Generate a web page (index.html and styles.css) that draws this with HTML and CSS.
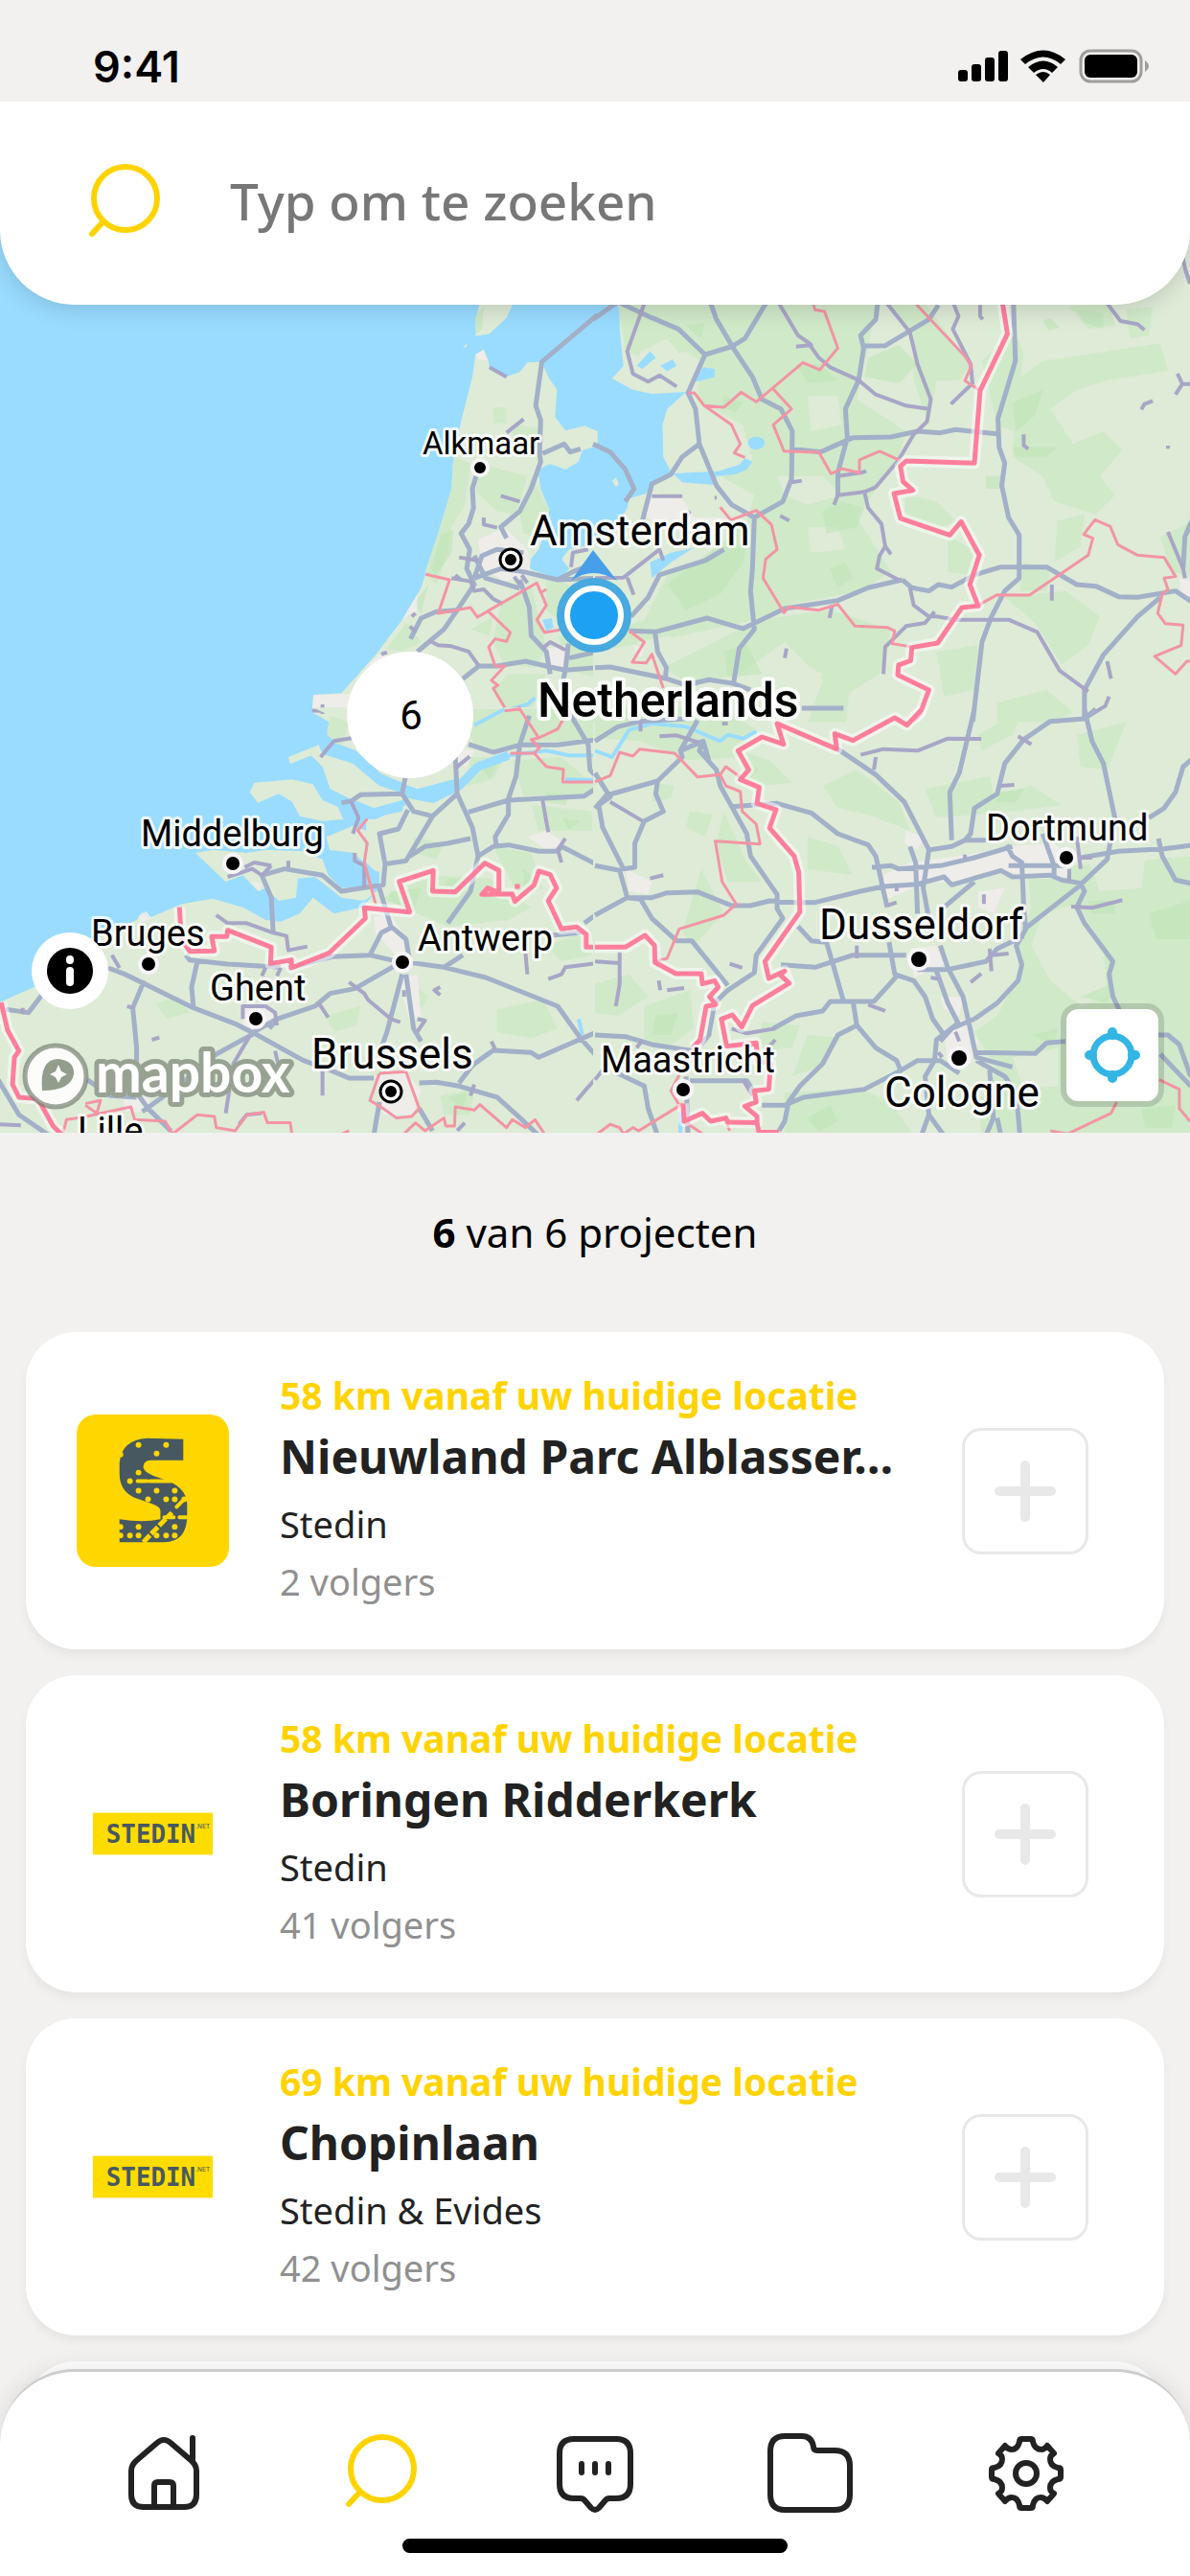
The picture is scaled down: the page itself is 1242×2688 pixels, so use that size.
FILE: index.html
```html
<!DOCTYPE html>
<html lang="nl">
<head>
<meta charset="UTF-8" />
<meta name="viewport" content="width=device-width, initial-scale=1.0" />
<title>Projecten</title>
<link rel="stylesheet" href="styles.css">
</head>
<body>

<!-- shared icons -->
<svg class="sprite" width="0" height="0" aria-hidden="true">
  <symbol id="icon-search" viewBox="0 0 84 84">
    <circle cx="45" cy="37" r="33"/>
    <path d="M21 62 L10 74"/>
  </symbol>
  <symbol id="icon-plus" viewBox="0 0 64 64">
    <path d="M32 5 V59 M5 32 H59"/>
  </symbol>
</svg>

<div class="screen">
  <header class="statusbar">
    <span class="time">9:41</span>
    <svg class="status-icons" width="202" height="36" viewBox="0 0 202 36">
      <rect x="1" y="22" width="10" height="12" rx="3"/>
      <rect x="15" y="16" width="10" height="18" rx="3"/>
      <rect x="29" y="9" width="10" height="25" rx="3"/>
      <rect x="43" y="2" width="10" height="32" rx="3"/>
      <path d="M66 11 Q90 -8 113 11 L108 16 Q90 1 71 16 Z"/>
      <path d="M74 19 Q90 6 105 19 L99 25 Q90 17 80 25 Z"/>
      <path d="M82 27 Q90 21 97 27 L90 35 Z"/>
      <rect x="129" y="2" width="63" height="32" rx="10" fill="none" stroke="#9f9e9d" stroke-width="3"/>
      <rect x="133" y="6" width="55" height="24" rx="6"/>
      <path d="M196 12 Q204 18 196 24 Z" fill="#9f9e9d"/>
    </svg>
  </header>

  <section class="map">
    <form class="search">
      <svg class="search-icon" aria-hidden="true"><use href="#icon-search"/></svg>
      <input type="search" placeholder="Typ om te zoeken" aria-label="Zoeken" />
    </form>

    <svg class="map-canvas" viewBox="0 0 1242 1076" role="img" aria-label="Kaart">
      <rect width="1242" height="1076" fill="#99dcff"/>

      <!-- north west -->
      <g transform="translate(0 204) scale(.396 .3333)">
        <path class="land" d="M1253 180 L1275 165 1287 200 1290 222 1333 250 1370 235 1390 205 1428 203 1445 250 1468 290 1463 375 1490 418 1540 403 1575 420 V465 L1535 480 1525 515 1490 540 1450 522 1418 540 1425 600 1448 665 1440 720 1420 790 1400 820 1395 850 1440 870 1480 880 1500 850 1480 820 1500 790 1575 770 V1335 H875 L822 1300 826 1245 900 1240 990 1120 1060 1010 1110 910 1160 720 1190 600 1195 500 1215 390 1245 250Z"/>
        <path class="land" d="M1270 0 H1360 L1335 65 1290 115 1253 122 1253 70Z M1220 155 L1232 145 1228 158Z"/>
        <path class="wood" d="M1195 500 L1240 520 1225 650 1190 720 1180 800 1150 900 1120 860 1160 720 1190 600Z M1300 345 H1335 V395 H1300Z M1260 520 L1390 560 1360 680 1310 670 1255 610Z M1360 400 L1420 410 1415 470 1340 460Z M1400 560 L1448 665 1430 760 1380 740 1370 680Z M1320 960 L1400 900 1420 1000 1440 1100 1410 1160 1330 1150 1300 1080Z M1020 1100 L1070 1020 1110 1080 1060 1110Z M1240 1040 L1300 1000 1290 1060Z M1340 1180 L1440 1180 1400 1300 1330 1290 1300 1230Z M1470 1060 L1570 1110 V1190 L1500 1170Z M1440 880 L1500 900 1470 1010 1440 980Z"/>
        <path class="forest" d="M1165 740 L1195 730 1190 800 1150 870 1135 850Z M1253 60 L1275 30 1270 100 1253 120Z M1090 960 L1130 900 1110 990Z"/>
        <path class="city" d="M1253 180 L1275 165 1287 200 1260 195Z M826 1245 L930 1243 920 1300 822 1300Z M970 1150 L1000 1120 1050 1130 990 1190Z M1260 760 L1330 720 1390 790 1400 870 1330 890 1270 850Z M1440 1100 L1500 1090 1490 1160 1450 1160Z M1060 1010 L1100 930 1100 980Z"/>
        <path class="water" d="M1430 1010 L1455 1005 1458 1035 1440 1045Z M1400 820 L1440 780 1480 800 1485 850 1430 860Z"/>
        <path class="river" d="M1270 1320 L1330 1295 1390 1275 1410 1255"/>
        <path class="road" d="M1575 55 L1428 203 1412 340 1425 385 1422 490 1425 515 1400 600 1370 670 1320 720 1335 755 M1255 560 L1245 600 1248 660 1235 710 1215 740 1238 790 1230 850 1250 900 1205 980 1170 1040 1100 1110 M1430 490 L1487 460 1503 485 1530 475 M1220 1195 L1262 1155 1310 1155 1385 1140 1450 1158 1490 1168 1575 1160 M1370 885 L1395 970 1400 1060 1440 1110 1450 1180 M1380 860 L1470 885 1575 880 M1250 880 L1270 810 1310 790 1380 800 M1250 880 L1320 850 1380 860 M1250 810 L1280 880 1370 912 M1205 980 L1150 985 1110 1005 1082 1070 M1498 1085 L1490 1168 1480 1220 M1500 1130 L1575 1110 M1470 885 L1510 860 1575 830"/>
        <path class="street" d="M1290 220 L1335 250 M1335 425 L1380 382 M1320 622 L1370 640 M1275 690 V712 L1310 722 M1190 880 L1240 890 1250 920 1275 915 1300 945 1325 960 M1210 815 L1260 825 M1200 870 L1215 885 M1080 1030 L1095 1048 M1085 1000 L1095 990 M1130 1075 L1155 1090 1190 1093 1235 1110 1262 1155 M1005 1118 L1020 1112 M822 1295 L920 1298 M850 1275 V1305 M1430 1100 L1450 1080 1490 1105 M1505 845 L1510 800 1550 790 M1355 875 L1370 900 M1375 870 L1390 895"/>
        <path class="province" d="M1122 868 L1185 885 1155 990 1240 972 1258 1002 1415 895 1425 925 1440 915 M1415 895 L1440 965 1415 1010 1435 1050 1475 1042 M1288 985 L1345 1050 1335 1078 1305 1070 1288 1095 1305 1155 1330 1155 1295 1200 1312 1215 1300 1225 1335 1295 1370 1285 1385 1320"/>
      </g>

      <!-- north east -->
      <g transform="translate(621 204) scale(.396 .3333)">
        <path class="land" d="M60 -300 H1580 V1335 H-5 V765 L60 710 85 660 90 630 135 615 150 585 205 560 180 500 178 400 190 350 240 297 150 303 100 290 45 255 75 215 65 100Z"/>
        <path class="land" d="M45 575 L55 565 63 585 55 595Z"/>
        <path class="wood" d="M60 20 H740 L720 160 690 320 820 420 800 500 690 690 780 860 700 920 520 960 420 1010 230 1060 0 1110 V1060 L130 1010 190 870 290 820 400 700 420 620 330 560 415 510 390 400 270 320 280 200 240 170 150 200 80 170Z"/>
        <path class="wood" d="M760 20 H870 L990 210 960 260 900 260 880 400 840 260 840 120Z M1020 200 L1105 100 1130 180 1100 420 1060 400Z M1110 260 L1180 200 1350 170 1490 145 1510 230 1350 260 1270 290 1200 350 1260 460 1340 420 1390 480 1330 560 1370 620 1320 680 1210 640 1180 560 1100 500Z M820 620 L900 640 950 700 880 740 815 690Z M930 750 L1000 790 990 870 930 860Z M1220 700 L1290 680 1280 780 1210 830Z M1130 830 L1200 850 1190 920 1120 920Z M1080 940 L1240 920 1330 1000 1300 1090 1230 1150 1160 1020Z M430 1010 L620 980 780 1040 750 1180 670 1240 660 1335 H560 L600 1200 500 1080 380 1180 250 1210 180 1160Z M900 1110 L1010 1090 1000 1230 920 1250Z M1060 1270 L1190 1230 1260 1300 1200 1335 H1060Z M1490 750 L1580 700 V880 L1520 860Z M1400 40 L1470 30 1460 120 1410 130Z M1250 30 L1360 20 1370 90 1300 100Z"/>
        <path class="pale" d="M120 170 L190 130 240 200 220 260 150 250 110 200Z M180 400 L240 310 270 400 330 480 360 520 200 540Z M560 310 L640 310 650 400 570 420Z M480 560 L600 560 650 620 560 650 500 620Z M560 720 L640 720 660 790 570 800Z M110 1080 L200 1060 190 1180 120 1150Z M430 1210 L520 1130 600 1180 560 1300 440 1290Z"/>
        <path class="forest" d="M720 190 L800 150 850 210 800 270 710 250Z M600 670 L650 640 710 660 690 720 610 740Z M310 790 L400 770 390 830 330 930 240 980 190 900Z M530 210 L590 210 640 260 560 270Z M620 850 L660 830 680 880 640 910Z M340 1110 L400 1090 440 1180 350 1190Z M340 310 L390 330 370 360 335 345Z M1100 330 L1180 290 1160 370 1110 420Z M1100 470 L1220 470 1190 500 1110 500Z M240 90 L290 80 280 130Z M1270 40 L1340 50 1340 100 1290 80Z M1030 560 H1070 V600 H1030Z M1180 75 L1200 65 1225 95 1195 105Z"/>
        <path class="city" d="M150 610 L230 630 260 690 340 690 320 740 180 730 130 680Z M1540 880 L1580 890 V950 L1545 930Z M100 1090 L130 1100 120 1130Z"/>
        <path class="water" d="M110 215 L145 170 160 190 125 225Z M172 215 L205 195 215 215 190 232Z M260 260 L285 220 315 225 315 250 270 265Z M205 552 L325 545 380 525 395 505 415 515 400 540 370 555 320 560 315 588 230 580Z M145 830 L200 800 260 785 200 830 150 880Z"/>
        <ellipse class="water" cx="425" cy="457" rx="22" ry="20"/>
        <path class="road" d="M-5 70 L60 15 M60 15 L150 65 220 100 290 180 360 155 395 130 450 20 M305 20 L320 70 370 170 415 250 440 320 490 350 520 420 518 570 495 640 420 690 415 850 410 920 420 1040 380 1100 365 1210 M290 180 L245 300 265 350 275 460 230 500 200 555 150 585 138 640 125 700 M275 460 L320 590 360 650 420 690 M518 475 L595 485 680 440 780 438 850 420 910 425 950 415 1060 428 M745 20 L740 70 700 120 708 160 695 260 660 350 665 440 640 550 640 620 M1103 20 L1108 200 1062 380 1065 470 1080 520 1072 590 1090 690 1118 745 1118 880 1080 920 1045 1000 1020 1080 995 1335 M90 1045 L160 1048 295 1005 390 1038 500 975 640 950 720 910 810 885 M95 1000 L140 940 170 870 290 825 340 790 M0 1160 L40 1158 190 1195 240 1215 300 1198 365 1210 410 1230 M158 1050 L165 1110 188 1160 185 1200 M810 885 L835 910 880 920 905 900 940 908 1000 870 1070 845 1190 845 1270 900 1320 905 1380 938 1430 940 1530 920 1580 960 M1490 940 L1430 1000 1340 1120 1290 1230 1290 1320 M-5 460 L40 485 80 540 103 600 80 640 M545 1287 H655 M1580 680 L1555 750 1550 850 M708 153 L765 152 880 70 905 25"/>
        <path class="street" d="M130 20 L85 170 100 240 140 265 170 245 215 280 M485 20 L535 120 560 140 590 190 620 220 695 260 740 305 820 340 880 350 M770 20 L830 110 850 210 885 320 875 390 840 430 800 510 740 595 710 610 640 620 630 650 M710 610 L720 660 755 710 765 780 750 810 743 850 800 885 M765 780 L780 805 M945 20 L958 60 943 100 990 210 995 270 938 335 M530 155 L570 150 535 120 M1350 20 L1385 75 1430 85 1448 103 M1535 240 L1548 272 1530 305 M1548 272 H1580 M1470 325 L1448 335 1440 352 M1130 430 V465 L1142 475 M1510 465 V475 M150 623 H230 M315 628 h6 M250 670 L235 700 M488 685 L512 700 M640 560 L700 550 715 545 M518 580 L545 575 M0 880 L75 878 170 790 180 825 M85 878 L102 932 M505 1100 L500 1130 M625 965 L618 1005 M830 910 L840 965 880 1000 900 1000 950 1010 1090 1010 1165 1048 1225 1170 1300 1235 M895 985 L870 1020 820 1030 765 1095 760 1180 M1204 900 V950 M1510 735 L1550 850 1555 880 M1350 1140 L1360 1195 M1355 1250 L1345 1280 1290 1320 M1015 25 V60 L1022 70"/>
        <path class="province" d="M575 20 L580 40 605 45 640 160 592 228 548 205 425 328 385 298 340 345 288 340 262 300 245 300 M288 340 L360 400 383 460 367 488 395 502 M470 288 L518 350 470 400 498 482 590 486 622 553 650 537 697 550 697 510 750 483 805 512 M845 20 L975 185 992 215 975 262 1015 293 M330 658 L358 698 425 668 465 712 480 790 450 820 443 880 498 988 510 970 590 980 640 962 685 1030 770 1034 790 1045 783 1085 835 1095 M1010 965 L1060 932 1145 933 1300 808 1312 755 1288 743 1318 697 1358 718 1378 775 1430 808 1500 815 1530 875 1500 880 1510 915 1495 930 1483 990 1503 1022 1550 1027 1545 1090 1475 1125 1530 1180 1560 1140 1580 1140 M90 1045 L130 1080 98 1143 135 1145 150 1118 180 1225"/>
        <path class="halo" d="M1073 10 L1087 115 1015 293 1000 520 820 513 805 530 812 578 838 605 788 615 805 693 935 745 965 703 1013 808 988 900 1010 967 967 972 903 1083 835 1097 832 1138 800 1152 798 1183 880 1230 857 1303 830 1335"/>
        <path class="border" d="M1073 10 L1087 115 1015 293 1000 520 820 513 805 530 812 578 838 605 788 615 805 693 935 745 965 703 1013 808 988 900 1010 967 967 972 903 1083 835 1097 832 1138 800 1152 798 1183 880 1230 857 1303 830 1335"/>
      </g>

      <!-- south west -->
      <g transform="translate(0 634) scale(.396 .3333)">
        <path class="land" d="M825 -5 L870 20 862 70 880 105 960 150 1010 210 1100 250 1210 215 1200 255 1130 290 1075 265 1070 300 990 345 965 345 965 480 1000 520 1000 560 955 620 880 640 825 590 790 640 740 665 700 660 640 620 560 593 480 610 390 655 375 635 360 660 250 720 200 800 90 870 -5 920 V1335 H1575 V-5Z"/>
        <path class="land" d="M658 260 L670 230 770 220 825 235 850 285 890 305 905 345 850 350 790 335 770 290 735 265 680 293Z"/>
        <path class="land" d="M760 150 L840 112 850 140 930 170 1000 240 1065 265 1060 285 985 310 930 285 870 250 850 180 820 145 765 172Z"/>
        <path class="land" d="M515 450 L560 440 650 450 700 440 800 445 850 470 865 520 900 560 970 550 990 575 960 600 900 590 830 525 785 530 780 590 735 600 700 560 680 570 640 520 595 540Z"/>
        <path class="land" d="M860 400 L930 365 965 380 960 480 940 460 870 445Z"/>
        <path class="wood" d="M1210 0 H1575 V100 H1430 L1260 130 1230 60Z M1240 150 L1330 150 1300 220 1230 240Z M1350 160 L1480 150 1568 240 1540 270 1380 270Z M1400 300 L1560 320 1560 380 1420 380Z M1010 590 L1140 520 1290 530 1400 620 1340 660 1180 680 1060 620Z M1090 400 L1170 420 1150 470 1090 450Z M1300 430 L1400 450 1430 560 1370 590 1330 500Z M870 20 L920 40 900 120 862 80Z M1310 940 L1430 910 1470 1000 1400 1030 1310 1010Z M410 920 L470 900 500 950 440 970Z M1160 1210 L1250 1190 1240 1270 1170 1270Z M1080 850 L1130 900 1110 940 1075 900Z M1440 740 L1560 690 V770 L1480 790Z M860 960 L950 930 940 990 880 1010Z"/>
        <path class="forest" d="M1030 570 L1110 560 1090 630 1020 600Z M1180 530 L1240 530 1220 580 1170 560Z M1440 260 L1500 270 1490 300 1440 290Z M1260 160 L1310 170 1290 220Z M1480 340 L1530 350 1500 375Z M1180 1215 L1230 1200 1220 1250Z M1380 500 L1410 530 1380 560Z"/>
        <path class="city" d="M985 650 L1030 640 1080 740 1050 780 990 700Z M1050 840 L1100 830 1110 960 1080 980Z M990 1150 L1060 1130 1110 1190 1090 1270 1010 1270Z M365 650 L385 632 400 655 370 670Z M640 920 L700 920 730 980 680 1010 640 990Z M320 1190 L390 1200 400 1260 330 1260Z M1390 400 L1440 380 1490 420 1440 440Z M1210 120 L1250 130 1230 180 1200 170Z M660 540 L690 545 685 570Z"/>
        <path class="water" d="M865 440 L935 450 945 490 1000 510 990 555 920 560 870 520Z M925 280 L985 310 1065 285 1060 320 980 340 930 310Z"/>
        <path class="river thick" d="M860 110 L930 140 990 210 1060 245 M1075 265 L1140 280 1210 240 1260 180 1340 145"/>
        <path class="river" d="M1340 145 L1440 130 1500 145 1575 145 M1250 50 L1330 0 M1490 220 L1570 222 M1525 970 L1535 1020"/>
        <path class="road" d="M1235 110 L1300 135 1370 112 1470 112 1575 95 M1395 20 L1370 110 1360 210 1340 280 1340 330 1305 400 1308 425 M1500 10 L1550 110 1555 190 1575 215 M1068 215 L1060 265 1090 320 1140 335 1205 265 1200 150 M1205 265 L1245 370 1260 460 1240 570 1180 670 M1060 265 L950 268 925 288 900 293 M1075 315 L1050 375 1000 390 1015 485 1070 475 1140 335 M1015 485 L1010 550 900 570 850 520 750 500 690 520 715 590 720 700 M1080 460 L1120 430 1180 420 1240 405 M1235 322 L1340 285 1540 272 1575 245 M1260 460 L1300 430 1340 425 1420 445 1470 445 1480 430 1575 488 M1000 560 L1030 680 1070 720 1080 790 M1030 685 L1005 700 975 770 875 775 760 810 M975 770 L1030 785 1170 808 1280 840 1470 930 1530 1030 1575 1090 M1170 808 L1220 770 M1060 790 L935 875 870 890 830 930 730 970 670 1010 M1060 830 L1020 1010 1005 1060 M1070 830 L1090 1000 1110 1040 M490 770 L500 785 600 798 740 808 M520 790 L505 870 510 935 M285 810 L330 830 510 935 620 985 670 1015 800 1100 870 1130 920 1155 985 1155 M380 850 L350 935 360 1060 360 1200 390 1250 450 1320 M120 880 L75 950 15 940 M670 1015 L570 1080 480 1170 375 1260 M230 1160 L290 1210 360 1215 M-5 1160 L50 1270 130 1335 M1105 1170 L1150 1168 1210 1180 1310 1215 1380 1290 1420 1335 M1210 1170 L1245 1115 1300 1068 1400 1075 1420 1090 1575 1010 M1000 1230 L985 1335 M1105 1250 L1140 1320 M1540 670 L1575 640 M730 970 L710 1000 M1455 708 L1530 700"/>
        <path class="street" d="M845 150 L880 100 930 90 M600 525 L665 500 690 520 715 490 M645 495 L670 480 715 490 M760 475 V495 M570 645 L600 670 650 670 720 700 755 710 760 755 810 743 M925 288 L945 340 930 390 M935 450 L935 475 960 490 V560 M850 1120 V1210 M700 810 L690 835 M740 810 L730 835 M640 970 L640 930 700 930 725 950 730 990 M660 1020 L615 1110 595 1265 M725 1070 L735 1120 M920 855 L960 890 970 910 1030 970 1055 980 M840 920 L865 965 M1200 185 L1238 148 M1430 285 L1445 385 M1490 405 L1470 440 1480 480 M295 770 L315 810 M400 1035 L420 1028 M335 930 L350 935 M60 935 V955 M1160 870 L1145 880 1160 895 M1100 970 L1120 975 1100 1010 M1385 765 L1390 830 M1445 845 L1480 830 1490 808 1575 795 M1295 1040 L1305 1065 M1250 1175 L1240 1210 M1225 1295 L1205 1320 M1520 1225 L1545 1190 1575 1150 M0 1300 L55 1303 M630 1300 L650 1270 690 1265 M1065 880 V900"/>
        <path class="province" d="M968 343 L943 380 968 420 960 480 990 610 M1330 5 L1370 0 1420 90 1400 95 1422 120 1408 138 1345 138 M1420 90 L1470 62 1485 30 M1408 138 L1440 180 1485 188 1483 228 1575 228 M165 1335 L175 1285 215 1278 345 1245 355 1285 435 1290 455 1330 520 1270 565 1275 570 1310 620 1320 650 1270 695 1262 705 1295 765 1295 770 1335 M225 1235 L265 1225 255 1265 225 1240 M1000 1140 L1070 1135 1105 1250 1085 1275 1045 1280 1010 1250 975 1225 1000 1140 M890 1335 L920 1320 M1060 1335 L1095 1295 1120 1320 1170 1280 1175 1305 1198 1305 1200 1245 1250 1255 1265 1238 1335 1310 1350 1285 1385 1310 1410 1285 1435 1330"/>
        <path class="halo" d="M473 620 L478 720 500 758 565 757 558 712 598 712 600 692 715 745 713 797 768 785 768 810 868 763 963 655 960 622 1080 635 1052 540 1142 505 1140 570 1200 572 1278 482 1315 505 1315 575 1350 578 1357 602 1408 550 1420 507 1450 518 1467 560 1445 600 1480 688 1520 682 1545 705 1545 745 1575 745 M3 918 L20 1005 50 1070 38 1090 33 1175 50 1215 100 1220 140 1305 165 1335"/>
        <path class="border" d="M473 620 L478 720 500 758 565 757 558 712 598 712 600 692 715 745 713 797 768 785 768 810 868 763 963 655 960 622 1080 635 1052 540 1142 505 1140 570 1200 572 1278 482 1315 505 1315 575 1285 560 1270 580 1350 578 1357 602 1408 550 1420 507 1450 518 1467 560 1445 600 1480 688 1520 682 1545 705 1545 745 1575 745 M1357 555 H1370 M3 918 L20 1005 50 1070 38 1090 33 1175 50 1215 100 1220 140 1305 165 1335"/>
      </g>

      <!-- south east -->
      <g transform="translate(621 634) scale(.396 .3333)">
        <path class="land" d="M-5 40 H1580 V1335 H-5Z"/>
        <path class="wood" d="M0 -5 H330 L420 60 380 150 240 160 120 100 0 90Z M380 130 L460 160 520 230 450 240 400 210Z M600 240 L690 190 800 290 830 380 720 330 640 310Z M1010 80 L1130 0 1100 80 1020 130Z M1270 80 L1400 40 1350 190 1280 180Z M340 320 L400 480 440 540 350 540 320 420Z M250 320 L310 330 290 400 240 370Z M560 400 L640 430 680 520 560 500Z M160 230 L210 240 200 280 150 290Z M1140 500 L1580 460 V1335 H1020 L1010 1230 1060 1130 1000 1010 1060 960 1120 830 1110 720 1150 620Z M0 860 L90 830 140 900 60 960 0 950Z M130 930 L250 880 260 1000 200 1050 130 1040Z M560 1020 L650 1030 590 1120 520 1150Z M500 1200 L700 1190 780 1230 840 1335 H500Z M440 980 L540 990 520 1060 430 1070Z M870 250 L1040 210 1050 270 1150 240 1230 300 1100 320 900 340Z M280 500 L340 640 260 740 230 700Z"/>
        <path class="pale" d="M1180 640 L1270 610 1340 740 1350 900 1280 930 1200 850 1150 740Z M1300 470 L1450 470 1440 560 1330 570Z M1100 1090 L1220 1060 1220 1180 1130 1190Z"/>
        <path class="forest" d="M380 140 L430 190 400 230Z M1060 260 L1130 250 1110 290 1060 290Z M1300 600 L1370 600 1370 640 1310 640Z M560 1280 L620 1240 640 1290 590 1325Z M1150 1020 L1220 1000 1210 1050Z M1280 900 L1360 860 1350 920Z M1460 640 L1568 600 1568 720 1480 720Z M1440 1250 L1530 1240 1520 1310 1450 1310Z M160 960 L220 950 200 1020 150 1020Z"/>
        <path class="city" d="M760 520 L830 480 960 460 1090 430 1210 420 1260 480 1240 530 1150 530 1070 500 960 545 880 540 760 600Z M830 750 L900 740 920 800 840 840Z M920 1000 L970 970 1010 1040 990 1110 930 1110Z M80 500 L150 540 140 580 90 570Z M820 380 L870 400 850 440 815 420Z M1010 570 L1080 560 1050 640 1010 620Z M910 900 L970 900 960 960 920 940Z"/>
        <path class="river" d="M0 130 L45 150 90 65 150 45 240 55 330 100 350 80 390 92 425 70 M225 1335 V1260"/>
        <path class="road" d="M0 100 L60 55 120 38 240 30 M270 35 L225 130 230 150 165 225 30 270 0 310 M165 225 L160 265 180 320 130 350 105 420 105 495 75 500 20 370 10 300 40 275 0 200 M225 130 L285 100 275 130 320 190 330 240 400 390 410 460 480 580 480 625 495 655 425 770 420 825 350 880 315 920 300 1020 280 1050 M285 100 L300 160 M360 305 L480 295 570 325 640 390 720 425 740 460 770 620 M640 125 L740 205 815 290 880 440 865 560 890 720 M1000 0 L960 200 935 260 940 410 M1320 0 L1290 30 1200 38 1130 95 1080 170 1060 265 1000 310 990 390 975 410 M1290 0 L1310 100 1340 170 1370 340 1350 470 1270 560 1130 690 M1575 155 L1550 180 1530 260 1500 310 1460 340 M0 490 L65 505 85 590 150 590 190 575 270 572 360 615 410 615 460 600 530 605 580 605 700 570 760 555 850 548 920 525 940 550 1070 505 1100 525 1200 520 1230 535 1280 545 M0 645 L85 590 120 595 150 655 215 725 255 725 350 865 M730 495 L780 490 800 500 910 490 1000 465 1100 430 M830 430 L845 480 850 640 M885 440 L940 430 975 410 1030 410 M1090 490 H1210 V525 M1085 425 L1100 460 1125 480 1130 620 1135 690 1110 740 1125 800 1115 850 1060 920 1000 970 M1180 390 L1210 490 M1210 490 H1240 M1280 465 L1380 445 1500 437 1580 425 M1485 405 L1495 460 1530 535 1580 548 M1280 545 L1290 570 1270 620 1290 670 1365 790 1355 830 1365 900 1385 950 M535 680 L570 725 610 730 630 810 655 915 M490 800 L580 808 680 770 820 770 M775 730 L790 830 840 850 870 900 890 970 920 1020 M655 915 L735 915 800 830 M470 1000 L530 960 600 945 620 915 655 915 M920 620 L1000 540 M910 740 L930 810 970 900 985 980 1005 1090 1100 1120 M900 820 L930 920 960 990 M850 815 L930 815 1030 790 1060 750 1130 710 M680 915 L690 990 740 1060 795 1100 805 1130 M690 990 L640 1020 600 1110 540 1180 510 1230 500 1290 485 1320 M440 1240 H500 L550 1215 710 1190 800 1135 850 1100 910 1100 960 1140 M960 980 L900 1035 895 1100 870 1150 880 1270 860 1335 M1000 970 L940 1000 910 1040 M1005 1075 L1160 1078 1190 1045 1240 1040 M1005 1100 L1080 1150 1110 1200 1120 1335 M1040 1130 L1050 1280 1030 1335 M1490 1080 L1570 1180 M1485 1020 L1510 1020 1540 1050 1570 1150 M0 1020 L80 1025 150 1050 260 1070 M250 1163 H400 L420 1200 M60 1140 L130 1180 140 1250 165 1335 M240 1150 L245 1335 M880 1270 L920 1335 M1060 1280 L1070 1335"/>
        <path class="street" d="M335 45 H350 M120 38 V70 M170 85 L215 82 275 105 M700 143 L760 125 850 130 930 92 1018 93 M740 150 L735 190 M1115 85 L1150 110 M40 290 L125 350 M145 530 L180 520 M0 790 L65 795 M65 760 V860 L55 930 M168 850 L172 880 M190 880 L235 873 M355 797 L388 810 M1070 240 L1105 237 M1270 400 L1280 500 M1280 465 H1310 M1250 500 V540 M1255 618 L1310 622 1390 598 M770 615 L795 605 M795 550 V570 M1040 750 L1045 820 M1045 770 L1090 765 M990 855 L1018 828 M885 840 L905 845 M720 925 L765 945 M360 1000 L400 1015 475 1000 M475 1035 L460 1055 470 1075 M1025 580 L1025 610 M975 455 V470 M0 1160 L20 1130 M110 1060 L125 1035 M905 1075 L915 1090 M950 1010 L960 1040 M690 740 V780 M390 1160 L415 1210"/>
        <path class="province" d="M0 228 L40 208 65 135 100 147 118 125 210 138 270 212 330 205 345 180 383 213 M330 205 L345 240 383 258 388 320 425 360 435 422 317 413 335 540 372 610 340 645 222 688 190 780 160 790 M222 1240 L200 1195 260 1060 M0 1335 L40 1300 65 1310 75 1330 100 1310 115 1320 232 1235 M235 1290 L290 1335 M345 1290 L355 1320 M1200 1320 L1245 1330 1360 1265 1375 1230 M1487 1160 L1540 1190 1540 1250 1568 1290"/>
        <path class="halo" d="M862 0 L822 50 790 27 680 98 632 77 637 125 480 45 497 110 440 87 377 130 405 190 383 220 433 245 427 295 477 315 460 372 525 460 537 510 540 635 448 790 458 843 500 820 512 858 415 928 387 995 362 957 333 970 347 1055 425 1045 428 1100 463 1110 458 1190 420 1195 425 1230 395 1243 427 1275 427 1295 350 1293 345 1280 305 1290 283 1265 235 1290 232 1235 M0 745 H80 L132 708 157 740 158 793 213 828 280 828 283 860 315 850 325 870 302 900 318 925 293 930 277 1035 258 1060"/>
        <path class="border" d="M862 0 L822 50 790 27 680 98 632 77 637 125 480 45 497 110 440 87 377 130 405 190 383 220 433 245 427 295 477 315 460 372 525 460 537 510 540 635 448 790 458 843 500 820 488 832 512 858 415 928 387 995 362 957 333 970 347 1055 425 1045 428 1100 463 1110 458 1190 420 1195 425 1230 395 1243 427 1275 427 1295 350 1293 345 1280 305 1290 283 1265 235 1290 232 1235 M427 1295 L432 1325 485 1325 M0 745 H80 L132 708 157 740 158 793 213 828 280 828 283 860 315 850 325 870 302 900 318 925 293 930 277 1035 258 1060"/>
      </g>

      <!-- strip next to the search bar -->
      <path class="street" d="M1232 150 L1237 175 1242 190"/>

      <!-- towns -->
      <g class="dot">
        <circle cx="501" cy="382" r="6"/>
        <circle cx="243" cy="795" r="7"/>
        <circle cx="155" cy="900" r="7"/>
        <circle cx="267" cy="957" r="7"/>
        <circle cx="420" cy="898" r="7"/>
        <circle cx="1113" cy="789" r="7"/>
        <circle cx="959" cy="895" r="8"/>
        <circle cx="713" cy="1031" r="7"/>
        <circle cx="1001" cy="998" r="8"/>
      </g>
      <g class="capital">
        <circle cx="533" cy="478" r="11"/>
        <circle cx="408" cy="1033" r="11"/>
      </g>
      <g class="capital-core">
        <circle cx="533" cy="478" r="6"/>
        <circle cx="408" cy="1033" r="6"/>
      </g>

      <g class="label small">
        <text x="441" y="368">Alkmaar</text>
      </g>
      <g class="label">
        <text x="147" y="777">Middelburg</text>
        <text x="95" y="881">Bruges</text>
        <text x="219" y="938">Ghent</text>
        <text x="436" y="886">Antwerp</text>
        <text x="81" y="1087">Lille</text>
        <text x="1029" y="771">Dortmund</text>
        <text x="627" y="1013">Maastricht</text>
      </g>
      <g class="label large">
        <text x="553" y="463">Amsterdam</text>
        <text x="325" y="1009">Brussels</text>
        <text x="855" y="874">Dusseldorf</text>
        <text x="923" y="1049">Cologne</text>
      </g>
      <text class="label country" x="561" y="642">Netherlands</text>

      <!-- current position -->
      <path d="M619 468 L644 500 Q619 484 596 500 Z" fill="#479fe9"/>
      <circle cx="620" cy="536" r="39" fill="#46a9e0"/>
      <circle cx="620" cy="536" r="28" fill="#1da1f2" stroke="#fff" stroke-width="6"/>

      <!-- cluster -->
      <circle cx="428" cy="640" r="66" fill="#fff"/>
      <text class="cluster" x="429" y="655">6</text>

      <!-- map provider -->
      <circle cx="58" cy="1017" r="32" fill="#fff" fill-opacity=".9" stroke="#6f7a69" stroke-opacity=".65" stroke-width="5"/>
      <path d="M44 1032 Q41 999 61 999 Q78 1001 77 1015 Q74 1032 44 1032Z" fill="#929d8c"/>
      <path d="M61 1005 L64 1012 70 1015 64 1018 61 1024 58 1018 52 1015 58 1012Z" fill="#fff"/>
      <text class="provider" x="100" y="1034">mapbox</text>
    </svg>

    <button class="info" type="button" aria-label="Informatie">
      <svg width="80" height="80" viewBox="0 0 80 80">
        <circle cx="40" cy="40" r="24"/>
        <g stroke="#fff" stroke-width="8" stroke-linecap="round">
          <path d="M40 28 v1 M40 40 V52"/>
        </g>
      </svg>
    </button>
    <button class="locate" type="button" aria-label="Mijn locatie">
      <svg width="60" height="60" viewBox="0 0 60 60" fill="none" stroke="#33b5e5" stroke-linecap="round">
        <circle cx="30" cy="30" r="20" stroke-width="7"/>
        <path d="M30 6 V9 M30 51 V54 M6 30 H9 M51 30 H54" stroke-width="10"/>
      </svg>
    </button>
  </section>

  <main class="results">
    <p class="count"><strong>6</strong> van 6 projecten</p>

    <ul class="projects">
      <li class="card">
        <svg class="logo filled" viewBox="0 0 160 160" role="img" aria-label="Stedin">
          <path fill="#475860" d="M112 26 V48 H78 Q70 48 70 56 Q72 62 88 67 Q116 75 116 95 V106 Q116 134 92 134 H45 V110 Q70 114 88 110 V101 Q88 97 80 94 L60 87 Q45 80 45 62 V52 Q46 27 74 25Z"/>
          <path d="M70 134 L100 103" stroke="#ffd600" stroke-width="5" stroke-dasharray="10 2"/>
          <path d="M64 70 h10 M77 70 h22 M108 108 h9 M92 108 h10 M105 97 l6 -6" stroke="#ffd600" stroke-width="4" stroke-linecap="round"/>
          <g fill="#ffd600">
            <circle cx="65" cy="32" r="3"/><circle cx="94" cy="32" r="3"/><circle cx="84" cy="41" r="3"/>
            <circle cx="46" cy="42" r="3"/><circle cx="65" cy="61" r="3"/><circle cx="56" cy="70" r="3"/>
            <circle cx="65" cy="80" r="3"/><circle cx="84" cy="80" r="3"/><circle cx="103" cy="80" r="3"/>
            <circle cx="75" cy="89" r="3"/><circle cx="94" cy="89" r="3"/><circle cx="103" cy="89" r="3"/>
            <circle cx="113" cy="89" r="3"/><circle cx="46" cy="118" r="3"/><circle cx="65" cy="118" r="3"/>
            <circle cx="46" cy="127" r="3"/><circle cx="56" cy="127" r="3"/><circle cx="65" cy="127" r="3"/>
            <circle cx="84" cy="127" r="3"/><circle cx="94" cy="127" r="3"/><circle cx="103" cy="127" r="3"/>
            <circle cx="103" cy="118" r="3"/>
          </g>
        </svg>
        <div class="details">
          <p class="distance">58 km vanaf uw huidige locatie</p>
          <h2>Nieuwland Parc Alblasser…</h2>
          <p class="company">Stedin</p>
          <p class="followers">2 volgers</p>
        </div>
        <button class="follow" type="button" aria-label="Volgen"><svg><use href="#icon-plus"/></svg></button>
      </li>
      <li class="card">
        <svg class="logo" viewBox="0 0 160 160" role="img" aria-label="Stedin">
          <rect x="17" y="58" width="126" height="44" fill="#ffdc00"/>
          <text class="logo-word" x="31" y="90">STEDIN</text>
          <text class="logo-net" x="125" y="74">.NET</text>
        </svg>
        <div class="details">
          <p class="distance">58 km vanaf uw huidige locatie</p>
          <h2>Boringen Ridderkerk</h2>
          <p class="company">Stedin</p>
          <p class="followers">41 volgers</p>
        </div>
        <button class="follow" type="button" aria-label="Volgen"><svg><use href="#icon-plus"/></svg></button>
      </li>
      <li class="card">
        <svg class="logo" viewBox="0 0 160 160" role="img" aria-label="Stedin">
          <rect x="17" y="58" width="126" height="44" fill="#ffdc00"/>
          <text class="logo-word" x="31" y="90">STEDIN</text>
          <text class="logo-net" x="125" y="74">.NET</text>
        </svg>
        <div class="details">
          <p class="distance">69 km vanaf uw huidige locatie</p>
          <h2>Chopinlaan</h2>
          <p class="company">Stedin &amp; Evides</p>
          <p class="followers">42 volgers</p>
        </div>
        <button class="follow" type="button" aria-label="Volgen"><svg><use href="#icon-plus"/></svg></button>
      </li>
      <li class="card"></li>
    </ul>
  </main>
</div>

<nav class="tabbar">
  <div class="tabs">
    <a href="#home" aria-label="Home">
      <svg viewBox="0 0 84 84">
        <path d="M8 39 Q8 33 14 28 L35 10 Q42 4 49 10 L70 28 Q76 33 76 39 V64 Q76 77 63 77 H21 Q8 77 8 64Z"/>
        <path d="M32 77 V55 Q32 51 36 51 H48 Q52 51 52 55 V77 M72 27 V5"/>
      </svg>
    </a>
    <a href="#zoeken" class="active" aria-label="Zoeken">
      <svg><use href="#icon-search"/></svg>
    </a>
    <a href="#berichten" aria-label="Berichten">
      <svg viewBox="0 0 84 84">
        <path d="M20 6 H64 Q79 6 79 21 V53 Q79 68 64 68 H57 Q54 68 52 71 L46 78 Q42 82 38 78 L32 71 Q30 68 27 68 H20 Q5 68 5 53 V21 Q5 6 20 6Z"/>
        <path d="M28 32 V41 M42 32 V41 M56 32 V41"/>
      </svg>
    </a>
    <a href="#projecten" aria-label="Projecten">
      <svg viewBox="-4 0 92 84">
        <path d="M15 3 H33 Q43 3 45 14 Q45 18 49 18 H67 Q83 18 83 34 V64 Q83 80 67 80 H15 Q0 80 0 64 V19 Q0 3 15 3Z"/>
      </svg>
    </a>
    <a href="#instellingen" aria-label="Instellingen">
      <svg viewBox="0 0 84 84">
        <path d="M37 6 H47 Q49 6 49 9 Q51 17 58 17 Q61 17 64 13 L71 21 Q67 23 67 27 Q67 34 75 36 Q78 36 78 38 V46 Q78 48 75 48 Q67 50 67 57 Q67 61 71 63 L64 71 Q61 67 57 67 Q51 67 49 75 Q49 78 47 78 H37 Q35 78 35 75 Q33 67 27 67 Q23 67 20 71 L13 63 Q17 61 17 57 Q17 50 9 48 Q6 48 6 46 V38 Q6 36 9 36 Q17 34 17 27 Q17 23 13 21 L20 13 Q23 17 27 17 Q33 17 35 9 Q35 6 37 6Z"/>
        <circle cx="42" cy="42" r="11"/>
      </svg>
    </a>
  </div>
  <div class="home-indicator"></div>
</nav>

</body>
</html>
```
FILE: styles.css
```css
* {
  box-sizing: border-box;
  margin: 0;
  padding: 0;
}

body {
  font-family: 'Noto Sans', 'Open Sans', sans-serif;
  background: #f2f1ef;
  color: #000;
}

button {
  border: none;
  background: none;
  cursor: pointer;
}

.sprite {
  position: absolute;
}

.screen {
  height: 100vh;
  overflow-y: auto;
  scrollbar-width: none;
}

/* Status bar */
.statusbar {
  display: flex;
  justify-content: space-between;
  align-items: flex-end;
  height: 106px;
  padding: 0 41px 16px 97px;
}

.time {
  font-family: Inter, sans-serif;
  font-size: 45px;
  font-weight: 600;
  line-height: 40px;
}

.status-icons {
  margin-bottom: 3px;
}

/* Map */
.map {
  position: relative;
  overflow: hidden;
}

.map-canvas {
  display: block;
  width: 100%;
}

.search {
  position: absolute;
  z-index: 1;
  top: 0;
  left: 0;
  right: 0;
  display: flex;
  align-items: center;
  gap: 70px;
  height: 212px;
  padding: 0 86px;
  background: #fff;
  border-radius: 0 0 78px 78px;
  box-shadow: 0 4px 24px rgba(0,0,0,0.15);
}

.search-icon {
  width: 84px;
  height: 84px;
  fill: none;
  stroke: #ffd300;
  stroke-width: 6;
  stroke-linecap: round;
}

.search input {
  flex: 1;
  min-width: 0;
  padding-bottom: 6px;
  border: none;
  outline: none;
  background: none;
  font-family: inherit;
  font-size: 53px;
  font-weight: 500;
  color: #222;
}

.search input::placeholder {
  color: #777;
}

.land { fill: #deebd7; }
.pale { fill: #deebd7; }
.wood { fill: #d0e9c9; }
.forest { fill: #bfe4b8; fill-opacity: 0.6; }
.city { fill: #f1eeee; fill-opacity: 0.8; }
.water { fill: #99dcff; }

.river, .road, .street, .province, .border, .halo {
  fill: none;
  stroke-linejoin: round;
  vector-effect: non-scaling-stroke;
}

.river { stroke: #99dcff; stroke-width: 4; }
.river.thick { stroke-width: 9; }
.road { stroke: #a2b0c8; stroke-width: 5; }
.street { stroke: #a8a6c6; stroke-width: 4; }
.province { stroke: #f394a4; stroke-width: 3; }
.halo { stroke: #fff; stroke-opacity: 0.5; stroke-width: 12; }
.border { stroke: #ff7e9c; stroke-width: 5; }

.dot circle {
  stroke: #f7f5f8;
  stroke-width: 8;
  paint-order: stroke;
}

.capital circle {
  fill: #fff;
  stroke: #000;
  stroke-width: 3;
}

.label {
  font-family: Roboto, sans-serif;
  font-size: 38px;
  stroke: #fff;
  stroke-opacity: 0.85;
  stroke-width: 6;
  stroke-linejoin: round;
  paint-order: stroke;
}

.label.small {
  font-size: 33px;
}

.label.large {
  font-size: 44px;
}

.label.country {
  font-size: 50px;
  font-weight: 500;
  stroke-width: 8;
}

.cluster {
  font-family: Roboto, sans-serif;
  font-size: 42px;
  text-anchor: middle;
}

.provider {
  font-family: Lato, sans-serif;
  font-size: 57px;
  font-weight: 700;
  fill: #fff;
  stroke: #98a292;
  stroke-width: 10;
  stroke-linejoin: round;
  paint-order: stroke;
}

.info {
  position: absolute;
  left: 33px;
  bottom: 129px;
  width: 80px;
  height: 80px;
  border-radius: 50%;
  background: #fff;
}

.locate {
  position: absolute;
  right: 33px;
  bottom: 33px;
  display: flex;
  align-items: center;
  justify-content: center;
  width: 96px;
  height: 96px;
  border-radius: 12px;
  background: #fff;
  box-shadow: 0 0 0 6px rgba(0,0,0,0.14);
}

/* Results */
.count {
  padding: 72px 0;
  font-size: 42px;
  line-height: 64px;
  text-align: center;
}

.projects {
  display: flex;
  flex-direction: column;
  gap: 27px;
  padding: 0 27px 240px;
  list-style: none;
}

.card {
  display: flex;
  align-items: center;
  gap: 53px;
  min-height: 331px;
  padding: 0 79px 0 53px;
  background: #fff;
  border-radius: 52px;
  box-shadow: 0 6px 10px rgba(0,0,0,0.05);
}

.logo {
  flex: none;
  width: 159px;
  height: 159px;
  border-radius: 20px;
}

.logo.filled {
  background: #ffd600;
}

.logo-word {
  font-family: 'DejaVu Sans Mono', monospace;
  font-size: 26px;
  font-weight: 700;
  fill: #475860;
}

.logo-net {
  font-family: Roboto, sans-serif;
  font-size: 7px;
  fill: #475860;
}

.details {
  flex: 1;
  min-width: 0;
  padding-bottom: 6px;
  color: #222;
  font-size: 38px;
  line-height: 60px;
  white-space: nowrap;
}

.details h2 {
  margin-bottom: 6px;
  font-size: 48px;
  font-weight: 700;
  line-height: 68px;
}

.distance {
  color: #ffd300;
  font-size: 39px;
  font-weight: 700;
}

.followers {
  color: #909090;
}

.follow {
  flex: none;
  display: flex;
  align-items: center;
  justify-content: center;
  width: 132px;
  height: 132px;
  border: 3px solid #e8e8e8;
  border-radius: 20px;
}

.follow svg {
  width: 64px;
  height: 64px;
  stroke: #e8e8e8;
  stroke-width: 10;
  stroke-linecap: round;
}

/* Tab bar */
.tabbar {
  position: fixed;
  left: 0;
  right: 0;
  bottom: 0;
  height: 216px;
  padding: 64px 58px 0;
  background: #fff;
  border-top: 3px solid #ccc;
  border-radius: 78px 78px 0 0;
  box-shadow: 0 0 24px rgba(0,0,0,0.1);
}

.tabs {
  display: flex;
}

.tabs a {
  flex: 1;
  display: flex;
  justify-content: center;
}

.tabs svg {
  width: 92px;
  height: 84px;
  fill: none;
  stroke: #222;
  stroke-width: 6;
  stroke-linecap: round;
  stroke-linejoin: round;
}

.tabs .active svg {
  stroke: #ffd300;
}

.home-indicator {
  width: 402px;
  height: 15px;
  margin: 26px auto 0;
  border-radius: 8px;
  background: #000;
}
```
